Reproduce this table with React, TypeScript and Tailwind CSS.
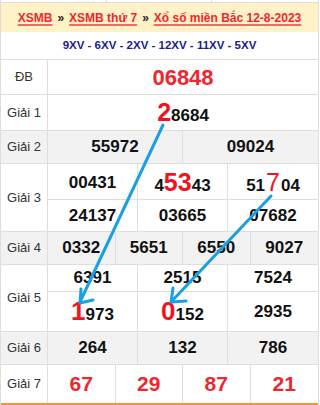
const App = () => {
  const line = "border-[#e2ddd8]";
  const num = "font-bold text-[17px] text-[#111]";

  return (
    <div
      className="relative w-[320px] h-[405px] bg-white overflow-hidden"
      style={{ fontFamily: '"Liberation Sans", Arial, sans-serif' }}
    >
      <div className={`w-[319px] border-l border-r ${line}`}>
        {/* partial row above */}
        <div className={`h-[3px] grid grid-cols-3 border-b ${line}`}>
          <div className={`border-r ${line}`}></div>
          <div className={`border-r ${line}`}></div>
          <div></div>
        </div>

        {/* title */}
        <div className="h-[29px] bg-[#fff2c6] flex items-center justify-center gap-[5px] text-[12px] font-bold">
          <span className="text-[#ee2630] underline decoration-[#f06a6a] decoration-2 underline-offset-2">XSMB</span>
          <span className="text-[#222]">»</span>
          <span className="text-[#ee2630] underline decoration-[#f06a6a] decoration-2 underline-offset-2">XSMB thứ 7</span>
          <span className="text-[#222]">»</span>
          <span className="text-[#ee2630] underline decoration-[#f06a6a] decoration-2 underline-offset-2">Xổ số miền Bắc 12-8-2023</span>
        </div>

        {/* codes */}
        <div className={`h-[28px] flex items-center justify-center border-b ${line} text-[11.5px] font-bold text-[#1c1c8f]`}>
          9XV - 6XV - 2XV - 12XV - 11XV - 5XV
        </div>

        {/* ĐB */}
        <div className={`h-[35px] flex border-b ${line}`}>
          <div className={`w-[47px] border-r ${line} flex items-center justify-center text-[13px] text-[#333]`}>ĐB</div>
          <div className="flex-1 flex items-center justify-center font-bold text-[22px] text-[#ee2630]">06848</div>
        </div>

        {/* Giải 1 */}
        <div className={`h-[36px] flex border-b ${line}`}>
          <div className={`w-[47px] border-r ${line} flex items-center justify-center text-[13px] text-[#333]`}>Giải 1</div>
          <div className="flex-1 flex items-center justify-center">
            <span className={`${num} flex items-baseline`}>
              <span className="text-[25px] text-[#f2141c]">2</span>8684
            </span>
          </div>
        </div>

        {/* Giải 2 */}
        <div className={`h-[33px] flex border-b ${line} bg-[#f2f2f2]`}>
          <div className={`w-[47px] border-r ${line} flex items-center justify-center text-[13px] text-[#333]`}>Giải 2</div>
          <div className="flex-1 grid grid-cols-2 divide-x divide-[#e2ddd8]">
            <div className={`flex items-center justify-center ${num}`}>55972</div>
            <div className={`flex items-center justify-center ${num}`}>09024</div>
          </div>
        </div>

        {/* Giải 3 */}
        <div className={`h-[68px] flex border-b ${line}`}>
          <div className={`w-[47px] border-r ${line} flex items-center justify-center text-[13px] text-[#333]`}>Giải 3</div>
          <div className="flex-1 flex flex-col">
            <div className={`h-[36px] grid grid-cols-3 border-b ${line} divide-x divide-[#e2ddd8]`}>
              <div className={`flex items-center justify-center ${num}`}>00431</div>
              <div className={`flex items-center justify-center ${num}`}>
                <span className="flex items-baseline">
                  4<span className="text-[25px] text-[#f2141c]">53</span>43
                </span>
              </div>
              <div className={`flex items-center justify-center ${num}`}>
                <span className="flex items-baseline">
                  51<span className="text-[25px] text-[#f2141c] font-normal px-[1px]">7</span>04
                </span>
              </div>
            </div>
            <div className="flex-1 grid grid-cols-3 divide-x divide-[#e2ddd8]">
              <div className={`flex items-center justify-center ${num}`}>24137</div>
              <div className={`flex items-center justify-center ${num}`}>03665</div>
              <div className={`flex items-center justify-center ${num}`}>07682</div>
            </div>
          </div>
        </div>

        {/* Giải 4 */}
        <div className={`h-[33px] flex border-b ${line} bg-[#f2f2f2]`}>
          <div className={`w-[47px] border-r ${line} flex items-center justify-center text-[13px] text-[#333]`}>Giải 4</div>
          <div className="flex-1 grid grid-cols-4 divide-x divide-[#e2ddd8]">
            <div className={`flex items-center justify-center ${num}`}>0332</div>
            <div className={`flex items-center justify-center ${num}`}>5651</div>
            <div className={`flex items-center justify-center ${num}`}>6550</div>
            <div className={`flex items-center justify-center ${num}`}>9027</div>
          </div>
        </div>

        {/* Giải 5 */}
        <div className={`h-[67px] flex border-b ${line}`}>
          <div className={`w-[47px] border-r ${line} flex items-center justify-center text-[13px] text-[#333]`}>Giải 5</div>
          <div className="flex-1 flex flex-col">
            <div className={`h-[32px] grid grid-cols-3 border-b ${line} divide-x divide-[#e2ddd8]`}>
              <div className={`flex items-center justify-center ${num}`}>6391</div>
              <div className={`flex items-center justify-center ${num}`}>2515</div>
              <div className={`flex items-center justify-center ${num}`}>7524</div>
            </div>
            <div className="flex-1 grid grid-cols-3 divide-x divide-[#e2ddd8]">
              <div className={`flex items-center justify-center ${num}`}>
                <span className="flex items-baseline">
                  <span className="text-[26px] text-[#f2141c]">1</span>973
                </span>
              </div>
              <div className={`flex items-center justify-center ${num}`}>
                <span className="flex items-baseline">
                  <span className="text-[26px] text-[#f2141c]">0</span>152
                </span>
              </div>
              <div className={`flex items-center justify-center ${num}`}>2935</div>
            </div>
          </div>
        </div>

        {/* Giải 6 */}
        <div className={`h-[33px] flex border-b ${line} bg-[#f2f2f2]`}>
          <div className={`w-[47px] border-r ${line} flex items-center justify-center text-[13px] text-[#333]`}>Giải 6</div>
          <div className="flex-1 grid grid-cols-3 divide-x divide-[#e2ddd8]">
            <div className={`flex items-center justify-center ${num}`}>264</div>
            <div className={`flex items-center justify-center ${num}`}>132</div>
            <div className={`flex items-center justify-center ${num}`}>786</div>
          </div>
        </div>

        {/* Giải 7 */}
        <div className="h-[40px] flex border-b-2 border-[#f0943a]">
          <div className={`w-[47px] border-r ${line} flex items-center justify-center text-[13px] text-[#333]`}>Giải 7</div>
          <div className="flex-1 grid grid-cols-4 divide-x divide-[#e2ddd8]">
            <div className="flex items-center justify-center font-bold text-[21px] text-[#ee2630]">67</div>
            <div className="flex items-center justify-center font-bold text-[21px] text-[#ee2630]">29</div>
            <div className="flex items-center justify-center font-bold text-[21px] text-[#ee2630]">87</div>
            <div className="flex items-center justify-center font-bold text-[21px] text-[#ee2630]">21</div>
          </div>
        </div>
      </div>

      {/* arrows drawn over the table */}
      <svg
        className="absolute inset-0 pointer-events-none"
        width="320"
        height="405"
        viewBox="0 0 320 405"
      >
        <g stroke="#1aa0e2" strokeWidth="3" strokeLinecap="round" fill="none">
          <path d="M163 125 L80 302" />
          <path d="M80 303 L81 289 M80 303 L93 300" />
          <path d="M271 196 L172 301" />
          <path d="M171 302 L173 288 M171 302 L186 301" />
        </g>
      </svg>
    </div>
  );
};

export default App;
